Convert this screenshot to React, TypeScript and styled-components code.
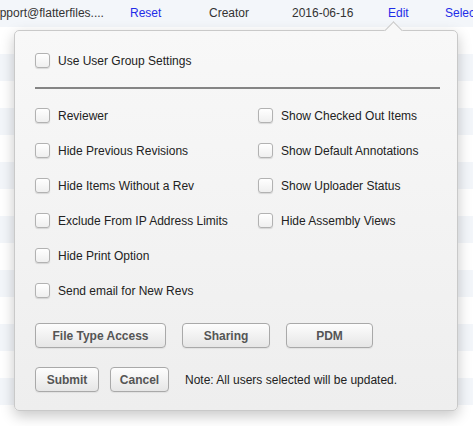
import styled, { createGlobalStyle } from "styled-components";

const Global = createGlobalStyle`
  html, body {
    margin: 0;
    padding: 0;
    background: #fff;
    font-family: "Liberation Sans", Arial, Helvetica, sans-serif;
    overflow: hidden;
  }
`;

const Page = styled.div`
  position: relative;
  width: 473px;
  height: 426px;
  overflow: hidden;
`;

const Stripe = styled.div<{ $alt: boolean }>`
  display: flex;
  align-items: center;
  height: 27px;
  background: ${(p) => (p.$alt ? "#f3f6fa" : "#ffffff")};
  font-size: 12px;
  color: #333;
  white-space: nowrap;
`;

const Cell = styled.div<{ $w?: number; $link?: boolean }>`
  flex: ${(p) => (p.$w ? `0 0 ${p.$w}px` : "1 0 auto")};
  color: ${(p) => (p.$link ? "#1f2de8" : "#333")};
  padding-bottom: 1px;
`;

const FirstCell = styled(Cell)`
  margin-left: -13px;
`;

const Popover = styled.div`
  position: absolute;
  left: 14px;
  top: 30px;
  width: 442px;
  height: 379px;
  box-sizing: content-box;
  border: 1px solid #c9c9c9;
  border-radius: 5px;
  background: linear-gradient(#f8f8f8, #eeeeee);
  box-shadow: 0 5px 14px rgba(0, 0, 0, 0.22);
  display: flex;
  flex-direction: column;
  padding: 0 0 0 20px;
  box-sizing: border-box;
  width: 444px;
  height: 381px;

  &::before {
    content: "";
    position: absolute;
    left: 372px;
    top: -7px;
    width: 12px;
    height: 12px;
    background: #f8f8f8;
    border-left: 1px solid #c9c9c9;
    border-top: 1px solid #c9c9c9;
    transform: rotate(45deg);
  }
`;

const TopRow = styled.div`
  display: flex;
  align-items: center;
  height: 15px;
  margin-top: 22px;
`;

const Divider = styled.div`
  width: 405px;
  height: 2px;
  background: #858585;
  margin-top: 19px;
`;

const OptionGrid = styled.div`
  display: grid;
  grid-template-columns: 223px 1fr;
  grid-auto-rows: 35px;
  margin-top: 9px;
`;

const Option = styled.label`
  display: flex;
  align-items: center;
  gap: 8px;
  font-size: 12px;
  color: #222;
  white-space: nowrap;
`;

const Box = styled.span`
  display: inline-block;
  width: 15px;
  height: 15px;
  box-sizing: border-box;
  border: 1px solid #b2b2b2;
  border-radius: 3px;
  background: linear-gradient(#ffffff, #efefef);
  box-shadow: 0 1px 1px rgba(0, 0, 0, 0.12);
  flex: 0 0 auto;
`;

const ButtonRow = styled.div<{ $gap: number; $top: number }>`
  display: flex;
  align-items: center;
  gap: ${(p) => p.$gap}px;
  margin-top: ${(p) => p.$top}px;
`;

const Button = styled.button<{ $w: number }>`
  width: ${(p) => p.$w}px;
  height: 25px;
  box-sizing: border-box;
  border: 1px solid #a9a9a9;
  border-radius: 4px;
  background: linear-gradient(#fdfdfd, #e6e6e6);
  font-family: "Liberation Sans", Arial, sans-serif;
  font-weight: bold;
  font-size: 12px;
  color: #555;
  padding: 0;
  box-shadow: 0 1px 1px rgba(0, 0, 0, 0.06);
`;

const Note = styled.span`
  font-size: 12px;
  color: #222;
  margin-left: 5px;
`;

const Check = ({ label }: { label: string }) => (
  <Option>
    <Box />
    {label}
  </Option>
);

const options = [
  "Reviewer",
  "Show Checked Out Items",
  "Hide Previous Revisions",
  "Show Default Annotations",
  "Hide Items Without a Rev",
  "Show Uploader Status",
  "Exclude From IP Address Limits",
  "Hide Assembly Views",
  "Hide Print Option",
  "",
  "Send email for New Revs",
];

export default function App() {
  const stripes = Array.from({ length: 16 }, (_, i) => i);
  return (
    <Page>
      <Global />
      {stripes.map((i) =>
        i === 0 ? (
          <Stripe key={i} $alt>
            <FirstCell $w={143}>support@flatterfiles....</FirstCell>
            <Cell $w={79} $link>Reset</Cell>
            <Cell $w={83}>Creator</Cell>
            <Cell $w={96}>2016-06-16</Cell>
            <Cell $w={57} $link>Edit</Cell>
            <Cell $link>Select</Cell>
          </Stripe>
        ) : (
          <Stripe key={i} $alt={i % 2 === 0} />
        )
      )}
      <Popover>
        <TopRow>
          <Check label="Use User Group Settings" />
        </TopRow>
        <Divider />
        <OptionGrid>
          {options.map((o, i) => (o ? <Check key={i} label={o} /> : <span key={i} />))}
        </OptionGrid>
        <ButtonRow $gap={16} $top={15}>
          <Button $w={131}>File Type Access</Button>
          <Button $w={88}>Sharing</Button>
          <Button $w={87}>PDM</Button>
        </ButtonRow>
        <ButtonRow $gap={11} $top={19}>
          <Button $w={64}>Submit</Button>
          <Button $w={59}>Cancel</Button>
          <Note>Note: All users selected will be updated.</Note>
        </ButtonRow>
      </Popover>
    </Page>
  );
}
